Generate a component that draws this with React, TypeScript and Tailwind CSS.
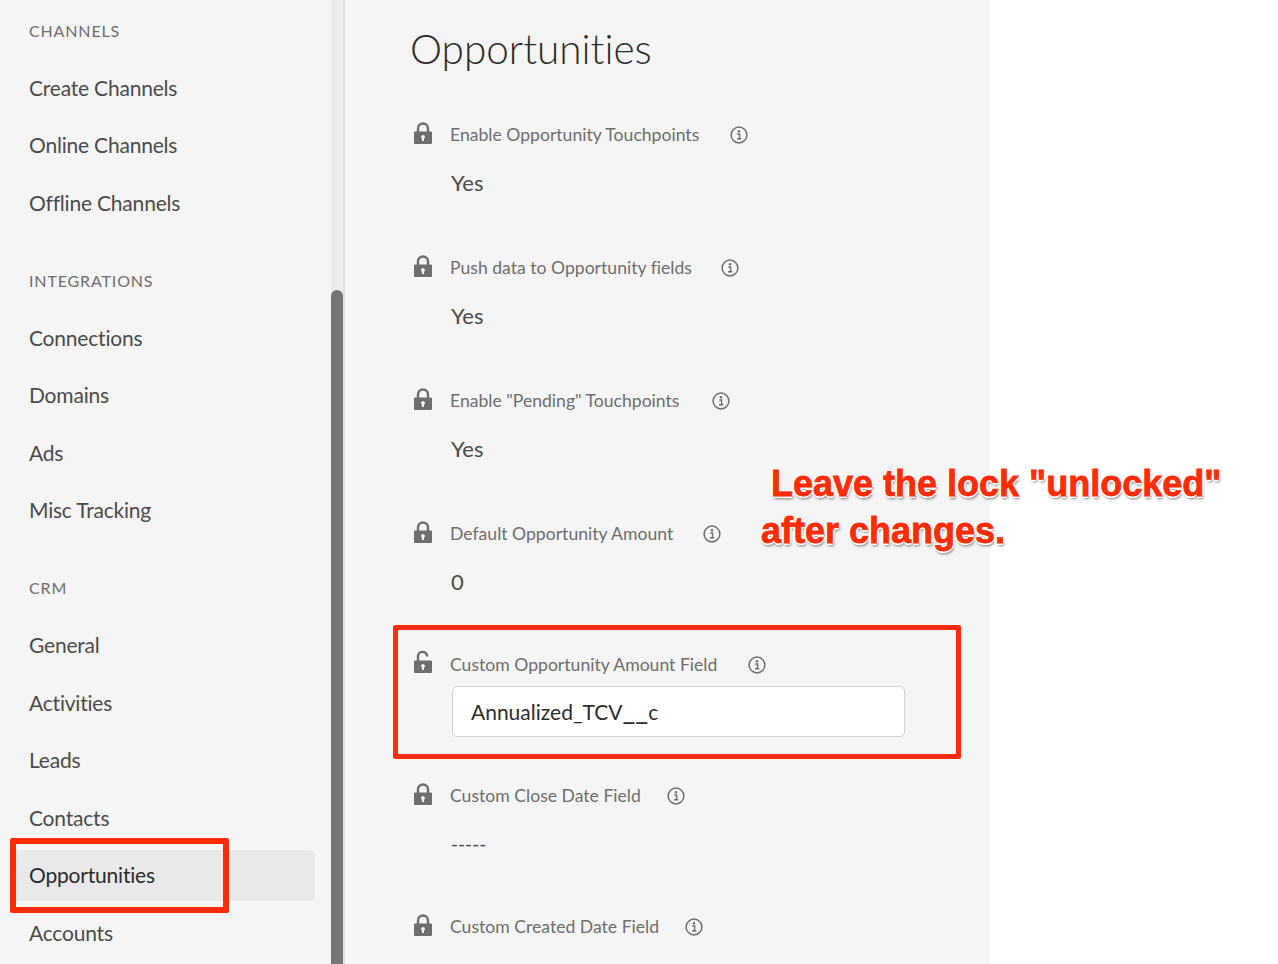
const NAV: { title: string; items: string[] }[] = [
  { title: "CHANNELS", items: ["Create Channels", "Online Channels", "Offline Channels"] },
  { title: "INTEGRATIONS", items: ["Connections", "Domains", "Ads", "Misc Tracking"] },
  { title: "CRM", items: ["General", "Activities", "Leads", "Contacts", "Opportunities", "Accounts"] },
];

const FIELDS: { label: string; value: string; height: string; gap: string }[] = [
  { label: "Enable Opportunity Touchpoints", value: "Yes", height: "h-[133px]", gap: "ml-[31px]" },
  { label: "Push data to Opportunity fields", value: "Yes", height: "h-[133px]", gap: "ml-[29px]" },
  { label: 'Enable "Pending" Touchpoints', value: "Yes", height: "h-[133px]", gap: "ml-[33px]" },
  { label: "Default Opportunity Amount", value: "0", height: "h-[131px]", gap: "ml-[30px]" },
];

function LockIcon({ open = false }: { open?: boolean }) {
  return (
    <svg width="20" height="24" viewBox="0 0 20 24" className={`shrink-0 text-[#6e6e6e] ${open ? "-mt-[7px]" : "-mt-[4px]"}`}>
      {open ? (
        <path d="M5 11V6.500a4.600 4.600 0 0 1 9.100-1" fill="none" stroke="currentColor" strokeWidth="2.400" strokeLinecap="round" />
      ) : (
        <path d="M5 11V7.500a5 5 0 0 1 10 0V11" fill="none" stroke="currentColor" strokeWidth="2.400" />
      )}
      <path
        fillRule="evenodd"
        fill="currentColor"
        d="M2 10.500h16a1 1 0 0 1 1 1V22a1 1 0 0 1-1 1H2a1 1 0 0 1-1-1V11.500a1 1 0 0 1 1-1ZM10 14a2 2 0 0 0-1 3.700V20h2v-2.300A2 2 0 0 0 10 14Z"
      />
    </svg>
  );
}

function InfoIcon() {
  return (
    <svg width="18" height="18" viewBox="0 0 18 18" className="shrink-0 text-[#6e6e6e]">
      <circle cx="9" cy="9" r="7.900" fill="none" stroke="currentColor" strokeWidth="1.500" />
      <circle cx="9" cy="5.300" r="1.200" fill="currentColor" />
      <path d="M7.300 8h2.300v4.500M7 12.700h4.200" fill="none" stroke="currentColor" strokeWidth="1.400" />
    </svg>
  );
}

function FieldLabel({ label, gap, open = false }: { label: string; gap: string; open?: boolean }) {
  return (
    <div className="flex h-[30px] items-center">
      <div className="flex w-[39px] justify-start pl-[2px]">
        <LockIcon open={open} />
      </div>
      <span className="text-[17.600px] text-[#6e6e6e]">{label}</span>
      <span className={gap}>
        <InfoIcon />
      </span>
    </div>
  );
}

export default function App() {
  return (
    <div className="relative flex h-[964px] w-[1278px] overflow-hidden bg-white font-['Lato','Open_Sans',sans-serif] [font-variant-ligatures:none]">
      {/* Sidebar */}
      <aside className="w-[331px] shrink-0 bg-[#f5f5f5] pl-[10px] pr-[16px] pt-[2px]">
        {NAV.map((section) => (
          <div key={section.title} className="mb-[20px]">
            <div className="flex h-[57.500px] items-center pl-[19px] text-[16px] tracking-[0.850px] text-[#6e6e6e]">
              {section.title}
            </div>
            {section.items.map((item) => (
              <div key={item} className="flex h-[57.500px] items-center">
                <div
                  className={`flex h-[51px] w-full items-center rounded-[5px] pb-[2px] pl-[19px] text-[21px] tracking-[-0.200px] ${
                    item === "Opportunities" ? "bg-[#e9e9e9] text-[#2c2c2c]" : "text-[#4b4b4b]"
                  }`}
                >
                  {item}
                </div>
              </div>
            ))}
          </div>
        ))}
      </aside>

      {/* Scrollbar */}
      <div className="relative w-[14px] shrink-0 border-r-2 border-[#e1e1e1] bg-[#ececec]">
        <div className="absolute left-0 top-[290px] h-[700px] w-[12px] rounded-t-[6px] bg-[#757575]" />
      </div>

      {/* Main */}
      <main className="w-[645px] shrink-0 bg-[#f5f5f5] pl-[66px]">
        <h1 className="-ml-px flex h-[99px] items-center text-[40.500px] font-light leading-none text-[#2c2c2c]">
          Opportunities
        </h1>
        <div className="pt-[21px]">
          {FIELDS.map((field) => (
            <div key={field.label} className={field.height}>
              <FieldLabel label={field.label} gap={field.gap} />
              <div className="mt-[18px] pl-[40px] text-[22px] leading-[30px] text-[#4b4b4b]">{field.value}</div>
            </div>
          ))}

          <div className="h-[131px]">
            <FieldLabel label="Custom Opportunity Amount Field" gap="ml-[31px]" open />
            <div className="ml-[41px] mt-[6px] flex h-[51px] w-[453px] items-center rounded-[5px] border border-[#d3d3d3] bg-white pb-[3px] pl-[18px] text-[21px] leading-[30px] text-[#2c2c2c]">
              <span>
                Annualized_TCV<span className="text-[28px]">__</span>c
              </span>
            </div>
          </div>

          <div className="h-[131px]">
            <FieldLabel label="Custom Close Date Field" gap="ml-[26px]" />
            <div className="mt-[18px] pl-[40px] text-[19px] leading-[30px] text-[#4b4b4b]">-----</div>
          </div>

          <FieldLabel label="Custom Created Date Field" gap="ml-[26px]" />
        </div>
      </main>

      {/* Annotation boxes */}
      <div className="absolute left-[10px] top-[838px] h-[75px] w-[219px] rounded-[2px] border-[6px] border-[#fb2c06]" />
      <div className="absolute left-[393px] top-[625px] h-[134px] w-[568px] rounded-[2px] border-[5px] border-[#fb2c06]" />

      {/* Annotation text */}
      <div className="absolute left-[761px] top-[460px] whitespace-nowrap font-['Liberation_Sans',sans-serif] text-[36px] font-bold leading-[47px] text-[#fb2c06] [-webkit-text-stroke:0.800px_#fb2c06] [text-shadow:-2px_0_0_#fff,2px_0_0_#fff,0_-2px_0_#fff,0_2px_0_#fff,1px_3px_3px_#00000080]">
        <div className="pl-[10px]">Leave the lock "unlocked"</div>
        <div>after changes.</div>
      </div>
    </div>
  );
}
